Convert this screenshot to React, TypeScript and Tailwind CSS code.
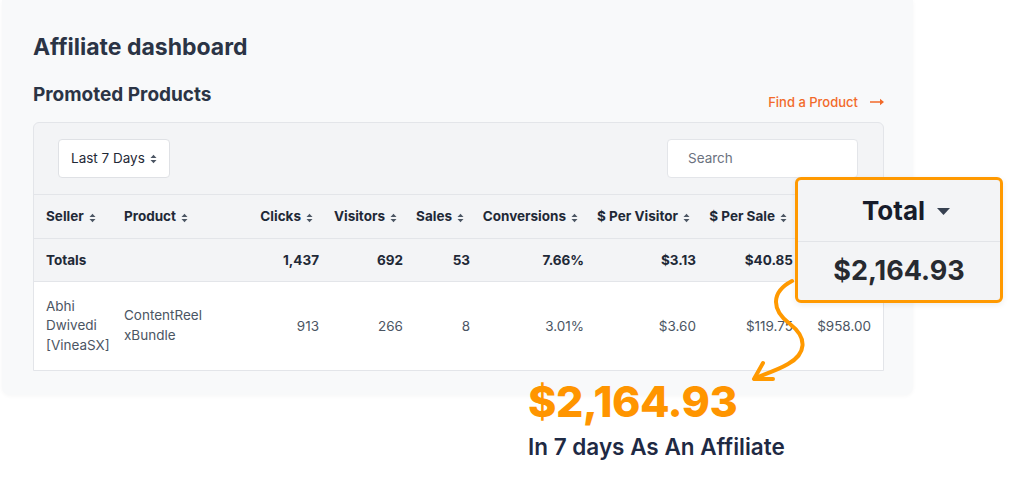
import React from 'react';

const columns = [
    { name: 'Seller', align: 'left', width: 78 },
    { name: 'Product', align: 'left', width: 139 },
    { name: 'Clicks', align: 'right', width: 80 },
    { name: 'Visitors', align: 'right', width: 84 },
    { name: 'Sales', align: 'right', width: 67 },
    { name: 'Conversions', align: 'right', width: 114 },
    { name: '$ Per Visitor', align: 'right', width: 112 },
    { name: '$ Per Sale', align: 'right', width: 97 },
    { name: '', align: 'right', width: 78 }, // "Total" column, covered by the callout
];

const totals = ['Totals', '', '1,437', '692', '53', '7.66%', '$3.13', '$40.85', ''];
const row = ['', '', '913', '266', '8', '3.01%', '$3.60', '$119.75', '$958.00'];

function SortIcon() {
    return (
        <svg width="7" height="10" viewBox="0 0 7 10" className="inline-block ml-[5px] text-[#4b5563]" fill="currentColor">
            <path d="M0.5 4L3.5 0.8L6.5 4Z" />
            <path d="M0.5 6L3.5 9.2L6.5 6Z" />
        </svg>
    );
}

function Callout() {
    return (
        <>
            {/* highlighted total */}
            <div className="absolute left-[795px] top-[177px] w-[208px] h-[126px] border-[3px] border-[#ff9900] rounded-md bg-[#f3f4f6] flex flex-col shadow-[0_2px_6px_rgba(0,0,0,0.08)]">
                <div className="h-[62px] flex items-center justify-center border-b border-[#e2e4e8] pl-[14px]">
                    <span className="text-[26px] font-bold text-[#171c2b]">Total</span>
                    <svg width="13" height="8" viewBox="0 0 13 8" className="ml-[12px] mt-[2px]" fill="#374151">
                        <path d="M0 0H13L6.5 7Z" />
                    </svg>
                </div>
                <div className="flex-1 flex items-center justify-center text-[27px] font-bold text-[#272a30]">
                    $2,164.93
                </div>
            </div>

            {/* curly arrow */}
            <svg className="absolute left-0 top-0 pointer-events-none" width="1024" height="491" fill="none">
                <path
                    d="M792 281 C 771 292, 771 310, 790 324 C 808 338, 806 354, 788 364 C 778 370, 765 374, 755 378"
                    stroke="#ff9900"
                    strokeWidth="4"
                    strokeLinecap="round"
                />
                <path d="M763 363 L 754 379 L 773 379" stroke="#ff9900" strokeWidth="4" strokeLinecap="round" strokeLinejoin="round" />
            </svg>

            <div className="absolute left-[528px] top-[375px] flex flex-col">
                <span className="text-[43px] leading-[52px] font-extrabold text-[#ff9500] tracking-[-0.5px]">$2,164.93</span>
                <span className="mt-[6px] text-[22.5px] leading-[28px] font-semibold text-[#1f2a44]">In 7 days As An Affiliate</span>
            </div>
        </>
    );
}

export default function App() {
    return (
        <div className="relative w-[1024px] h-[491px] overflow-hidden bg-white" style={{ fontFamily: 'Inter, "Liberation Sans", sans-serif' }}>
            <div className="ml-[2px] w-[911px] h-[395px] bg-[#f8f9fa] rounded-b-lg shadow-[0_1px_4px_rgba(0,0,0,0.04)] pl-[31px] pr-[29px] pt-[34px]">
                <h1 className="text-[23px] leading-[26px] font-bold text-[#2b3445]">Affiliate dashboard</h1>

                <div className="mt-[24px] h-[38px] flex items-start justify-between">
                    <h2 className="text-[19px] leading-[22px] font-bold text-[#2b3445]">Promoted Products</h2>
                    <a className="mt-[10px] text-[13px] leading-[16px] font-medium text-[#f26a2a] flex items-center">
                        Find a Product
                        <svg width="14" height="8" viewBox="0 0 14 8" className="ml-[12px]" fill="#f26a2a">
                            <path d="M0 3.2H10V0.8L14 4L10 7.2V4.8H0Z" />
                        </svg>
                    </a>
                </div>

                <div className="border border-[#e3e5e9] rounded-t-md bg-[#f3f4f6]">
                    <div className="h-[71px] flex items-center justify-between pl-6 pr-[25px]">
                        <div className="w-[112px] h-[39px] bg-white border border-[#dfe1e5] rounded flex items-center pl-3 text-[13.5px] text-[#1f2937]">
                            Last 7 Days
                            <SortIcon />
                        </div>
                        <div className="w-[191px] h-[39px] bg-white border border-[#e3e5e9] rounded flex items-center pl-5 text-[13.5px] text-[#6b7280]">
                            Search
                        </div>
                    </div>

                    <table className="table-fixed w-full border-collapse text-[13.5px]">
                        <colgroup>
                            {columns.map((c, i) => (
                                <col key={i} style={{ width: c.width }} />
                            ))}
                        </colgroup>
                        <thead>
                            <tr className="h-[44px] border-t border-[#e3e5e9] bg-[#f3f4f6]">
                                {columns.map((c, i) => (
                                    <th
                                        key={i}
                                        className={
                                            c.align === 'left'
                                                ? 'text-left font-bold text-[#1f2937] whitespace-nowrap pl-3'
                                                : 'text-right font-bold text-[#1f2937] whitespace-nowrap pr-[18px]'
                                        }
                                    >
                                        {c.name}
                                        {c.name && <SortIcon />}
                                    </th>
                                ))}
                            </tr>
                        </thead>
                        <tbody>
                            <tr className="h-[43px] border-t border-[#e3e5e9] bg-[#f3f4f6]">
                                {totals.map((v, i) => (
                                    <td
                                        key={i}
                                        className={
                                            i < 2
                                                ? 'pl-3 text-left font-bold text-[#1f2937]'
                                                : 'pr-3 text-right font-bold text-[#1f2937]'
                                        }
                                    >
                                        {v}
                                    </td>
                                ))}
                            </tr>
                            <tr className="h-[88px] border-t border-[#e3e5e9] bg-white text-[#4b5563]">
                                <td className="pl-3 leading-[19.5px]">
                                    Abhi
                                    <br />
                                    Dwivedi
                                    <br />
                                    [VineaSX]
                                </td>
                                <td className="pl-3 leading-[19.5px]">
                                    ContentReel
                                    <br />
                                    xBundle
                                </td>
                                {row.slice(2).map((v, i) => (
                                    <td key={i} className="pr-3 text-right">
                                        {v}
                                    </td>
                                ))}
                            </tr>
                        </tbody>
                    </table>
                </div>
            </div>

            <Callout />
        </div>
    );
}
